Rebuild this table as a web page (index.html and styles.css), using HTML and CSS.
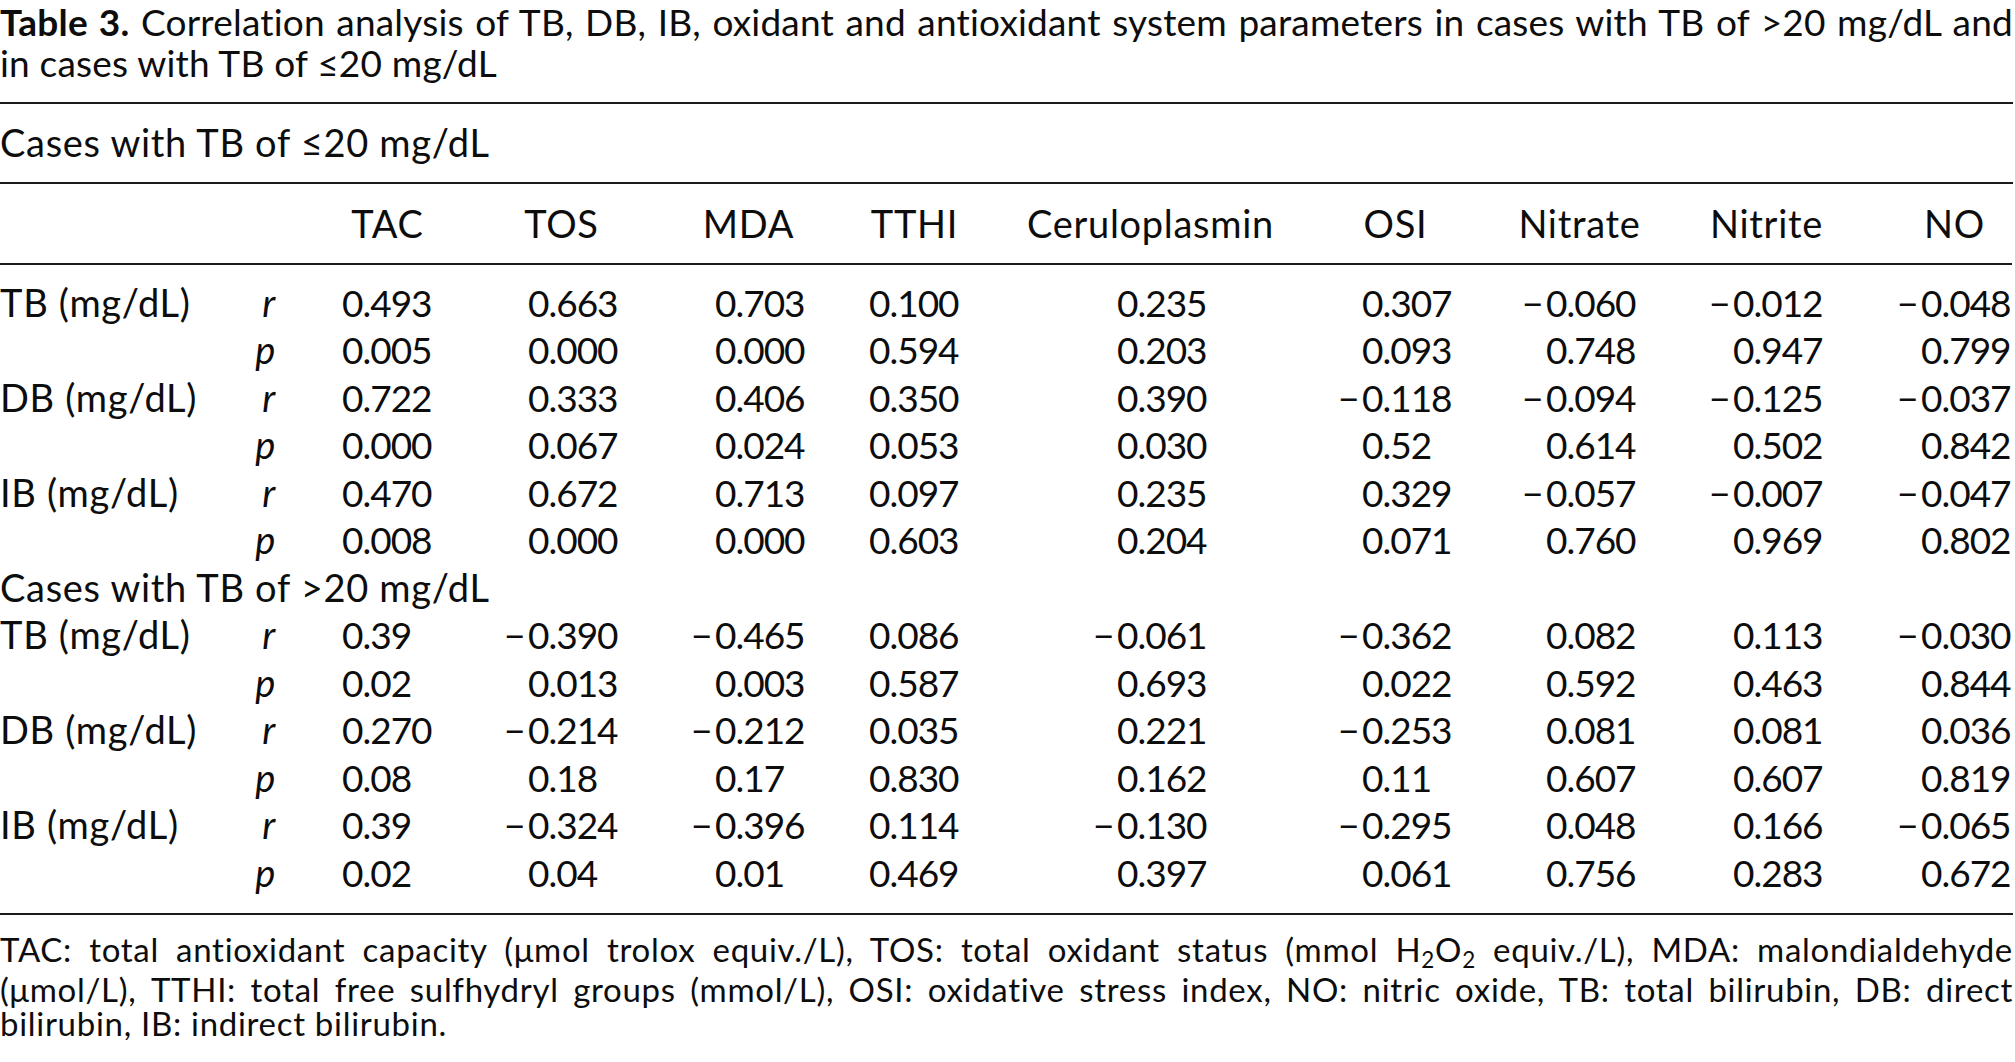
FILE: index.html
```html
<!DOCTYPE html>
<html lang="en">
<head>
<meta charset="utf-8">
<title>Table 3</title>
<link rel="stylesheet" href="styles.css">
</head>
<body>
<div class="page">
  <div class="title">
    <div class="tline just"><b>Table 3.</b> Correlation analysis of TB, DB, IB, oxidant and antioxidant system parameters in cases with TB of &gt;20 mg/dL and</div>
    <div class="tline">in cases with TB of ≤20 mg/dL</div>
  </div>

  <div class="table">
    <div class="caption">Cases with TB of ≤20 mg/dL</div>

    <div class="row head">
      <span></span><span></span>
      <span class="c"><span class="hb">TAC</span></span>
      <span class="c"><span class="hb">TOS</span></span>
      <span class="c"><span class="hb">MDA</span></span>
      <span class="c"><span class="hb">TTHI</span></span>
      <span class="c"><span class="hb">Ceruloplasmin</span></span>
      <span class="c"><span class="hb">OSI</span></span>
      <span class="c"><span class="hb">Nitrate</span></span>
      <span class="c"><span class="hb">Nitrite</span></span>
      <span class="c"><span class="hb">NO</span></span>
    </div>

    <div class="body">
      <div class="row">
        <span class="lab">TB (mg/dL)</span><span class="rp">r</span>
        <span class="c"><span class="n">0.493</span></span>
        <span class="c"><span class="n">0.663</span></span>
        <span class="c"><span class="n">0.703</span></span>
        <span class="c"><span class="n">0.100</span></span>
        <span class="c"><span class="n">0.235</span></span>
        <span class="c"><span class="n">0.307</span></span>
        <span class="c"><span class="n"><span class="m">−</span>0.060</span></span>
        <span class="c"><span class="n"><span class="m">−</span>0.012</span></span>
        <span class="c"><span class="n"><span class="m">−</span>0.048</span></span>
      </div>
      <div class="row">
        <span class="lab"></span><span class="rp">p</span>
        <span class="c"><span class="n">0.005</span></span>
        <span class="c"><span class="n">0.000</span></span>
        <span class="c"><span class="n">0.000</span></span>
        <span class="c"><span class="n">0.594</span></span>
        <span class="c"><span class="n">0.203</span></span>
        <span class="c"><span class="n">0.093</span></span>
        <span class="c"><span class="n">0.748</span></span>
        <span class="c"><span class="n">0.947</span></span>
        <span class="c"><span class="n">0.799</span></span>
      </div>
      <div class="row">
        <span class="lab">DB (mg/dL)</span><span class="rp">r</span>
        <span class="c"><span class="n">0.722</span></span>
        <span class="c"><span class="n">0.333</span></span>
        <span class="c"><span class="n">0.406</span></span>
        <span class="c"><span class="n">0.350</span></span>
        <span class="c"><span class="n">0.390</span></span>
        <span class="c"><span class="n"><span class="m">−</span>0.118</span></span>
        <span class="c"><span class="n"><span class="m">−</span>0.094</span></span>
        <span class="c"><span class="n"><span class="m">−</span>0.125</span></span>
        <span class="c"><span class="n"><span class="m">−</span>0.037</span></span>
      </div>
      <div class="row">
        <span class="lab"></span><span class="rp">p</span>
        <span class="c"><span class="n">0.000</span></span>
        <span class="c"><span class="n">0.067</span></span>
        <span class="c"><span class="n">0.024</span></span>
        <span class="c"><span class="n">0.053</span></span>
        <span class="c"><span class="n">0.030</span></span>
        <span class="c"><span class="n">0.52</span></span>
        <span class="c"><span class="n">0.614</span></span>
        <span class="c"><span class="n">0.502</span></span>
        <span class="c"><span class="n">0.842</span></span>
      </div>
      <div class="row">
        <span class="lab">IB (mg/dL)</span><span class="rp">r</span>
        <span class="c"><span class="n">0.470</span></span>
        <span class="c"><span class="n">0.672</span></span>
        <span class="c"><span class="n">0.713</span></span>
        <span class="c"><span class="n">0.097</span></span>
        <span class="c"><span class="n">0.235</span></span>
        <span class="c"><span class="n">0.329</span></span>
        <span class="c"><span class="n"><span class="m">−</span>0.057</span></span>
        <span class="c"><span class="n"><span class="m">−</span>0.007</span></span>
        <span class="c"><span class="n"><span class="m">−</span>0.047</span></span>
      </div>
      <div class="row">
        <span class="lab"></span><span class="rp">p</span>
        <span class="c"><span class="n">0.008</span></span>
        <span class="c"><span class="n">0.000</span></span>
        <span class="c"><span class="n">0.000</span></span>
        <span class="c"><span class="n">0.603</span></span>
        <span class="c"><span class="n">0.204</span></span>
        <span class="c"><span class="n">0.071</span></span>
        <span class="c"><span class="n">0.760</span></span>
        <span class="c"><span class="n">0.969</span></span>
        <span class="c"><span class="n">0.802</span></span>
      </div>

      <div class="row sub"><span class="full">Cases with TB of &gt;20 mg/dL</span></div>

      <div class="row">
        <span class="lab">TB (mg/dL)</span><span class="rp">r</span>
        <span class="c"><span class="n">0.39</span></span>
        <span class="c"><span class="n"><span class="m">−</span>0.390</span></span>
        <span class="c"><span class="n"><span class="m">−</span>0.465</span></span>
        <span class="c"><span class="n">0.086</span></span>
        <span class="c"><span class="n"><span class="m">−</span>0.061</span></span>
        <span class="c"><span class="n"><span class="m">−</span>0.362</span></span>
        <span class="c"><span class="n">0.082</span></span>
        <span class="c"><span class="n">0.113</span></span>
        <span class="c"><span class="n"><span class="m">−</span>0.030</span></span>
      </div>
      <div class="row">
        <span class="lab"></span><span class="rp">p</span>
        <span class="c"><span class="n">0.02</span></span>
        <span class="c"><span class="n">0.013</span></span>
        <span class="c"><span class="n">0.003</span></span>
        <span class="c"><span class="n">0.587</span></span>
        <span class="c"><span class="n">0.693</span></span>
        <span class="c"><span class="n">0.022</span></span>
        <span class="c"><span class="n">0.592</span></span>
        <span class="c"><span class="n">0.463</span></span>
        <span class="c"><span class="n">0.844</span></span>
      </div>
      <div class="row">
        <span class="lab">DB (mg/dL)</span><span class="rp">r</span>
        <span class="c"><span class="n">0.270</span></span>
        <span class="c"><span class="n"><span class="m">−</span>0.214</span></span>
        <span class="c"><span class="n"><span class="m">−</span>0.212</span></span>
        <span class="c"><span class="n">0.035</span></span>
        <span class="c"><span class="n">0.221</span></span>
        <span class="c"><span class="n"><span class="m">−</span>0.253</span></span>
        <span class="c"><span class="n">0.081</span></span>
        <span class="c"><span class="n">0.081</span></span>
        <span class="c"><span class="n">0.036</span></span>
      </div>
      <div class="row">
        <span class="lab"></span><span class="rp">p</span>
        <span class="c"><span class="n">0.08</span></span>
        <span class="c"><span class="n">0.18</span></span>
        <span class="c"><span class="n">0.17</span></span>
        <span class="c"><span class="n">0.830</span></span>
        <span class="c"><span class="n">0.162</span></span>
        <span class="c"><span class="n">0.11</span></span>
        <span class="c"><span class="n">0.607</span></span>
        <span class="c"><span class="n">0.607</span></span>
        <span class="c"><span class="n">0.819</span></span>
      </div>
      <div class="row">
        <span class="lab">IB (mg/dL)</span><span class="rp">r</span>
        <span class="c"><span class="n">0.39</span></span>
        <span class="c"><span class="n"><span class="m">−</span>0.324</span></span>
        <span class="c"><span class="n"><span class="m">−</span>0.396</span></span>
        <span class="c"><span class="n">0.114</span></span>
        <span class="c"><span class="n"><span class="m">−</span>0.130</span></span>
        <span class="c"><span class="n"><span class="m">−</span>0.295</span></span>
        <span class="c"><span class="n">0.048</span></span>
        <span class="c"><span class="n">0.166</span></span>
        <span class="c"><span class="n"><span class="m">−</span>0.065</span></span>
      </div>
      <div class="row">
        <span class="lab"></span><span class="rp">p</span>
        <span class="c"><span class="n">0.02</span></span>
        <span class="c"><span class="n">0.04</span></span>
        <span class="c"><span class="n">0.01</span></span>
        <span class="c"><span class="n">0.469</span></span>
        <span class="c"><span class="n">0.397</span></span>
        <span class="c"><span class="n">0.061</span></span>
        <span class="c"><span class="n">0.756</span></span>
        <span class="c"><span class="n">0.283</span></span>
        <span class="c"><span class="n">0.672</span></span>
      </div>
    </div>
  </div>

  <div class="notes">
    <div class="nline just">TAC: total antioxidant capacity (μmol trolox equiv./L), TOS: total oxidant status (mmol H<sub>2</sub>O<sub>2</sub> equiv./L), MDA: malondialdehyde</div>
    <div class="nline just">(μmol/L), TTHI: total free sulfhydryl groups (mmol/L), OSI: oxidative stress index, NO: nitric oxide, TB: total bilirubin, DB: direct</div>
    <div class="nline">bilirubin, IB: indirect bilirubin.</div>
  </div>
</div>
</body>
</html>
```

FILE: styles.css
```css
html, body {
  margin: 0;
  padding: 0;
  background: #ffffff;
}

body {
  font-family: "Lato", "Noto Sans", "Liberation Sans", sans-serif;
  color: #0d0d0d;
}

.page {
  width: 2015px;
}

/* ---------- title ---------- */
.title {
  font-size: 37px;
  letter-spacing: 0.2px;
  line-height: 41px;
  margin-top: 1px;
  margin-bottom: 19px;
  width: 2013px;
}

.tline {
  white-space: nowrap;
}

.just {
  text-align: justify;
  text-align-last: justify;
  white-space: normal;
}

.title b {
  font-weight: 700;
}

/* ---------- table ---------- */
.table {
  border-top: 2px solid #1a1a1a;
  border-bottom: 2px solid #1a1a1a;
  font-size: 38px;
  letter-spacing: 0.7px;
  line-height: 47.5px;
  width: 2013px;
}

.caption {
  padding: 14.5px 0 16px;
  border-bottom: 2px solid #1a1a1a;
  white-space: nowrap;
}

.row {
  display: grid;
  grid-template-columns: 240px 38px 155px 186px 187px 154px 248px 245px 184px 187px 188px;
  align-items: baseline;
  width: 2012px;
}

.head {
  padding: 15.5px 0 16px;
  border-bottom: 2px solid #1a1a1a;
}

.body {
  padding: 13.5px 0 17px;
}

.lab {
  white-space: nowrap;
}

.rp {
  font-style: italic;
  text-align: right;
  padding-right: 2px;
}

.full {
  grid-column: 1 / -1;
  white-space: nowrap;
}

.c {
  display: flex;
  justify-content: flex-end;
}

.n {
  display: block;
  width: 115px;
  padding-left: 24px;
  box-sizing: border-box;
  white-space: nowrap;
  font-size: 37px;
  letter-spacing: -1px;
}

.row > :nth-child(3) .n,
.row > :nth-child(6) .n {
  width: 91px;
  padding-left: 0;
}

.m {
  display: inline-block;
  width: 24px;
  margin-left: -24px;
  letter-spacing: 0;
}

.hb {
  display: flex;
  justify-content: center;
  width: 115px;
  white-space: nowrap;
}

.row > :nth-child(3) .hb,
.row > :nth-child(6) .hb {
  width: 91px;
}

/* ---------- notes ---------- */
.notes {
  font-size: 33px;
  letter-spacing: 0.7px;
  line-height: 34px;
  margin-top: 17px;
  width: 2013px;
}

.nline {
  white-space: nowrap;
}

.notes sub {
  font-size: 0.68em;
  line-height: 1;
  vertical-align: -0.28em;
}
```
